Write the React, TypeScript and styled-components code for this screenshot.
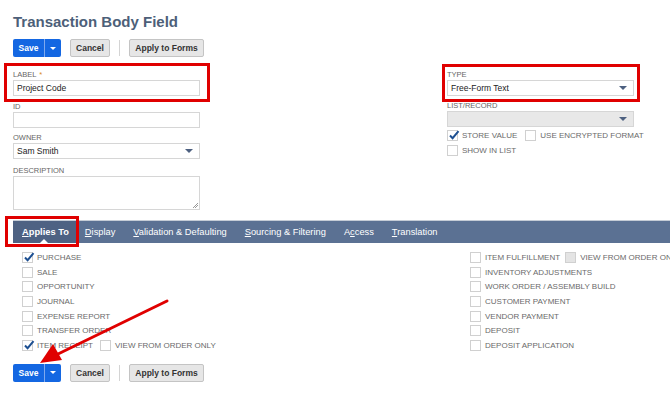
import React from 'react';
import styled, { createGlobalStyle } from 'styled-components';

const GlobalStyle = createGlobalStyle`
  html, body {
    margin: 0;
    padding: 0;
    background: #fff;
    font-family: "Liberation Sans", Arial, sans-serif;
    overflow: hidden;
  }
`;

const Page = styled.div`
  position: relative;
  width: 670px;
  height: 393px;
  padding-left: 13px;
  box-sizing: border-box;
  overflow: hidden;
`;

const Title = styled.h1`
  margin: 0;
  padding-top: 12px;
  font-size: 15px;
  line-height: 19px;
  font-weight: bold;
  color: #4d5f79;
`;

const ButtonRow = styled.div<{ $top: number }>`
  display: flex;
  align-items: center;
  height: 18px;
  margin-top: ${(p) => p.$top}px;
`;

const SaveGroup = styled.div`
  display: flex;
  height: 18px;
  border-radius: 2px;
  overflow: hidden;
  background: #1467e2;
`;

const SaveButton = styled.button`
  width: 31px;
  height: 18px;
  border: 0;
  padding: 0;
  background: transparent;
  color: #fff;
  font-family: inherit;
  font-size: 8.5px;
  font-weight: bold;
`;

const SaveMenu = styled.div`
  width: 17px;
  height: 18px;
  border-left: 1px solid #7fa9ee;
  box-sizing: border-box;
  display: flex;
  align-items: center;
  justify-content: center;
  &::after {
    content: '';
    border-left: 3px solid transparent;
    border-right: 3px solid transparent;
    border-top: 3px solid #fff;
  }
`;

const GrayButton = styled.button<{ $w: number }>`
  width: ${(p) => p.$w}px;
  height: 18px;
  margin-left: 9px;
  padding: 0;
  border: 1px solid #c4c4c4;
  border-radius: 2px;
  background: #e6e6e6;
  color: #333;
  font-family: inherit;
  font-size: 8.5px;
  font-weight: bold;
`;

const Divider = styled.div`
  width: 1px;
  height: 16px;
  background: #d4d4d4;
  margin-left: 9px;
`;

const Form = styled.div`
  display: flex;
  margin-top: 13px;
`;

const Column = styled.div<{ $left: number }>`
  width: 187px;
  margin-left: ${(p) => p.$left}px;
  display: flex;
  flex-direction: column;
`;

const Field = styled.div<{ $top: number }>`
  position: relative;
  margin-top: ${(p) => p.$top}px;
`;

const Highlight = styled.div<{ $inset: string }>`
  position: relative;
  &::after {
    content: '';
    position: absolute;
    inset: ${(p) => p.$inset};
    border: 3.5px solid #e00000;
    pointer-events: none;
  }
`;

const Label = styled.div`
  height: 10px;
  font-size: 7.5px;
  line-height: 10px;
  color: #666;
  text-transform: uppercase;
`;

const Required = styled.span`
  color: #d98a1b;
  margin-left: 3px;
`;

const Input = styled.div<{ $h?: number; $disabled?: boolean }>`
  height: ${(p) => p.$h ?? 16}px;
  box-sizing: border-box;
  border: 1px solid #d6d6d6;
  background: ${(p) => (p.$disabled ? '#e8e8e8' : '#fff')};
  display: flex;
  align-items: center;
  justify-content: space-between;
  padding: 0 6px 0 3px;
  font-size: 8.5px;
  color: #222;
  position: relative;
`;

const Caret = styled.span`
  border-left: 4px solid transparent;
  border-right: 4px solid transparent;
  border-top: 4px solid #4d6080;
`;

const Grip = styled.span`
  position: absolute;
  right: 1px;
  bottom: 1px;
  width: 5px;
  height: 5px;
  background: linear-gradient(135deg, transparent 45%, #999 45%, #999 55%, transparent 55%, transparent 70%, #999 70%, #999 80%, transparent 80%);
`;

const CheckRow = styled.div<{ $h?: number }>`
  display: flex;
  align-items: center;
  height: ${(p) => p.$h ?? 14.7}px;
  white-space: nowrap;
`;

const BoxWrap = styled.span<{ $gap?: number }>`
  display: flex;
  align-items: center;
  margin-left: ${(p) => p.$gap ?? 0}px;
`;

const Box = styled.span<{ $disabled?: boolean }>`
  position: relative;
  width: 11px;
  height: 11px;
  box-sizing: border-box;
  border: 1px solid #d0d0d0;
  background: ${(p) => (p.$disabled ? '#e4e4e4' : '#fff')};
  margin-right: 4px;
  flex-shrink: 0;
`;

const Tick = styled.svg`
  position: absolute;
  left: 0;
  top: -2px;
`;

const CheckText = styled.span`
  font-size: 8px;
  color: #6a6a6a;
  text-transform: uppercase;
`;

const TabBar = styled.div`
  display: flex;
  align-items: stretch;
  margin-top: 10px;
  height: 22px;
  background: #5b7193;
  border-top: 1px solid #c5ccd6;
`;

const Tab = styled.div<{ $active?: boolean }>`
  position: relative;
  display: flex;
  align-items: center;
  height: 100%;
  box-sizing: border-box;
  padding: ${(p) => (p.$active ? '0 7px 1px 9px' : '0 9px 1px 9px')};
  background: ${(p) => (p.$active ? '#4e6283' : 'transparent')};
  font-size: 9.3px;
  font-weight: ${(p) => (p.$active ? 'bold' : 'normal')};
  color: #fff;
  white-space: nowrap;
  u { text-decoration: underline; }
  ${(p) =>
    p.$active &&
    `&::after {
      content: '';
      position: absolute;
      left: 50%;
      bottom: 0;
      margin-left: -4px;
      border-left: 4px solid transparent;
      border-right: 4px solid transparent;
      border-bottom: 4px solid #fff;
    }`}
`;

const Lists = styled.div`
  display: grid;
  grid-template-columns: 448px 1fr;
  padding-left: 9px;
  margin-top: 7px;
`;

const Arrow = styled.svg`
  position: absolute;
  left: 0;
  top: 0;
  pointer-events: none;
`;

const Check = ({ checked, disabled }: { checked?: boolean; disabled?: boolean }) => (
  <Box $disabled={disabled}>
    {checked && (
      <Tick width="12" height="12" viewBox="0 0 12 12">
        <path d="M2 6.5 L4.6 9.2 L10.5 2.2" fill="none" stroke="#1d4f91" strokeWidth="2" />
      </Tick>
    )}
  </Box>
);

const Item = ({ label, checked, disabled, gap }: { label: string; checked?: boolean; disabled?: boolean; gap?: number }) => (
  <BoxWrap $gap={gap}>
    <Check checked={checked} disabled={disabled} />
    <CheckText>{label}</CheckText>
  </BoxWrap>
);

const Buttons = ({ top }: { top: number }) => (
  <ButtonRow $top={top}>
    <SaveGroup>
      <SaveButton>Save</SaveButton>
      <SaveMenu />
    </SaveGroup>
    <GrayButton $w={40}>Cancel</GrayButton>
    <Divider />
    <GrayButton $w={75}>Apply to Forms</GrayButton>
  </ButtonRow>
);

const leftItems = ['Purchase', 'Sale', 'Opportunity', 'Journal', 'Expense Report', 'Transfer Order'];
const rightItems = [
  'Inventory Adjustments',
  'Work Order / Assembly Build',
  'Customer Payment',
  'Vendor Payment',
  'Deposit',
  'Deposit Application',
];

export default function App() {
  return (
    <Page>
      <GlobalStyle />
      <Title>Transaction Body Field</Title>
      <Buttons top={8} />

      <Form>
        <Column $left={0}>
          <Highlight $inset="-7px -10px -6px -9px">
            <Label>
              Label<Required>*</Required>
            </Label>
            <Input>Project Code</Input>
          </Highlight>
          <Field $top={6}>
            <Label>ID</Label>
            <Input />
          </Field>
          <Field $top={5}>
            <Label>Owner</Label>
            <Input>
              Sam Smith
              <Caret />
            </Input>
          </Field>
          <Field $top={7}>
            <Label>Description</Label>
            <Input $h={34}>
              <Grip />
            </Input>
          </Field>
        </Column>

        <Column $left={247}>
          <Highlight $inset="-6px -6px -6px -5px">
            <Label>Type</Label>
            <Input>
              Free-Form Text
              <Caret />
            </Input>
          </Highlight>
          <Field $top={5}>
            <Label>List/Record</Label>
            <Input $disabled>
              <span />
              <Caret />
            </Input>
          </Field>
          <CheckRow $h={16}>
            <Item label="Store value" checked />
            <Item label="Use encrypted format" gap={8} />
          </CheckRow>
          <CheckRow $h={15}>
            <Item label="Show in list" />
          </CheckRow>
        </Column>
      </Form>

      <TabBar>
        <Highlight $inset="-5px -3px -4px -8px">
          <Tab $active>
            <span>
              <u>A</u>pplies To
            </span>
          </Tab>
        </Highlight>
        <Tab>
          <span>
            <u>D</u>isplay
          </span>
        </Tab>
        <Tab>
          <span>
            <u>V</u>alidation &amp; Defaulting
          </span>
        </Tab>
        <Tab>
          <span>
            <u>S</u>ourcing &amp; Filtering
          </span>
        </Tab>
        <Tab>
          <span>
            A<u>c</u>cess
          </span>
        </Tab>
        <Tab>
          <span>
            <u>T</u>ranslation
          </span>
        </Tab>
      </TabBar>

      <Lists>
        <div>
          {leftItems.map((l, i) => (
            <CheckRow key={l}>
              <Item label={l} checked={i === 0} />
            </CheckRow>
          ))}
          <CheckRow>
            <Item label="Item Receipt" checked />
            <Item label="View from order only" gap={7} />
          </CheckRow>
        </div>
        <div>
          <CheckRow>
            <Item label="Item Fulfillment" />
            <Item label="View from order only" gap={5} disabled />
          </CheckRow>
          {rightItems.map((l) => (
            <CheckRow key={l}>
              <Item label={l} />
            </CheckRow>
          ))}
        </div>
      </Lists>

      <Buttons top={11} />

      <Arrow width="670" height="393" viewBox="0 0 670 393">
        <line x1="167" y1="301" x2="58" y2="354" stroke="#e00000" strokeWidth="3" strokeLinecap="round" />
        <polygon points="40,363 53,344 62,360" fill="#e00000" />
      </Arrow>
    </Page>
  );
}
